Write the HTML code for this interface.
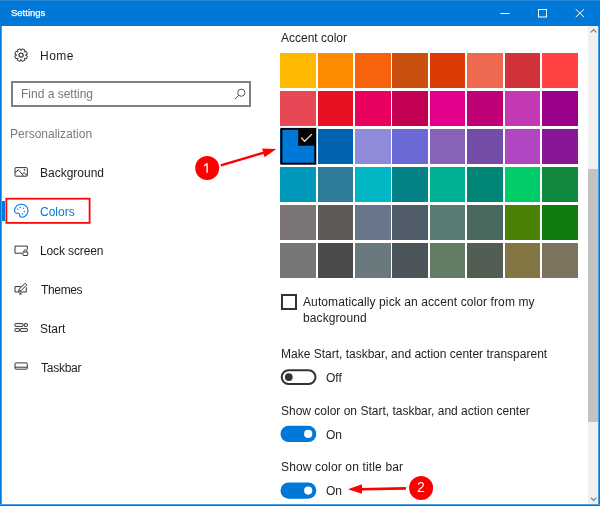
<!DOCTYPE html>
<html><head><meta charset="utf-8">
<style>
*{margin:0;padding:0;box-sizing:border-box}
html,body{width:600px;height:506px;overflow:hidden;background:#fff}
body{position:relative;font-family:"Liberation Sans",sans-serif;color:#1e1e1e}
.t{position:absolute;white-space:nowrap;font-size:12px;line-height:14px;will-change:transform}
.abs{position:absolute}
#title{left:0;top:0;width:600px;height:26px;background:#0078d7}
#bl{left:0;top:26px;width:2px;height:480px;background:linear-gradient(90deg,#0078d7 50%,#4c9fe2 50%)}
#br{left:598px;top:26px;width:2px;height:480px;background:linear-gradient(90deg,#4c9fe2 50%,#0078d7 50%)}
#bb{left:0;top:504px;width:600px;height:2px;background:linear-gradient(180deg,#4c9fe2 50%,#0078d7 50%)}
.sw{position:absolute;width:35.6px;height:35.4px}
</style></head><body>
<div id="title" class="abs"></div><div class="abs" style="left:0;top:0;width:600px;height:1px;background:#2a87d6"></div>
<div class="t" style="left:11px;top:7px;font-size:9.5px;line-height:12px;color:#fff;-webkit-text-stroke:0.25px #fff">Settings</div>
<svg class="abs" style="left:0;top:0" width="600" height="26">
  <path d="M500.5 13.5H509.5" stroke="#fff" stroke-width="1"/>
  <rect x="538.5" y="9.5" width="8" height="7.5" fill="none" stroke="#fff" stroke-width="1"/>
  <path d="M575.7 9.2L584.1 17.2M584.1 9.2L575.7 17.2" stroke="#fff" stroke-width="1"/>
</svg>

<!-- left nav -->
<svg class="abs" style="left:0;top:0" width="270" height="400">
  <g fill="none" stroke="#333" stroke-width="1" stroke-linejoin="round">
    <path d="M25.60 55.25 L27.43 56.07 L26.26 58.88 L24.38 58.18 L24.18 58.38 L24.88 60.26 L22.07 61.43 L21.25 59.60 L20.95 59.60 L20.13 61.43 L17.32 60.26 L18.02 58.38 L17.82 58.18 L15.94 58.88 L14.77 56.07 L16.60 55.25 L16.60 54.95 L14.77 54.13 L15.94 51.32 L17.82 52.02 L18.02 51.82 L17.32 49.94 L20.13 48.77 L20.95 50.60 L21.25 50.60 L22.07 48.77 L24.88 49.94 L24.18 51.82 L24.38 52.02 L26.26 51.32 L27.43 54.13 L25.60 54.95Z"/>
    <circle cx="21.1" cy="55.1" r="2.1" stroke-width="1.2"/>
    <!-- search -->
    <circle cx="241.3" cy="92.7" r="3.6" stroke="#555"/>
    <path d="M238.8 95.2L235 99" stroke="#555"/>
    <!-- background -->
    <rect x="15" y="167.6" width="12.3" height="8.6" rx="0.8"/>
    <path d="M15 172.6L18.3 169.8L23.5 175.8M22.3 174.2L24 172.6L27 175.4"/>
    <circle cx="24.5" cy="169.9" r="0.5"/>
    <!-- lock screen -->
    <path d="M22.3 253.2H15V246.1H27.3V249.6"/>
    <rect x="23" y="252" width="4.7" height="3.5" rx="0.6"/>
    <path d="M23.8 252V251.4A1.6 1.6 0 0 1 27 251.4V252"/>
    <!-- themes -->
    <path d="M20.8 286.6H15V292H26.3V287.4"/>
    <path d="M18.7 291.4L19.4 288.9L25.1 283.2L26.8 284.9L21.1 290.6Z"/>
    <path d="M19.3 293.9H21.5" stroke-width="1.5"/>
    <!-- start -->
    <rect x="15" y="323.6" width="8" height="2.8" rx="0.4"/>
    <rect x="24.3" y="323.6" width="3" height="2.8" rx="0.4"/>
    <rect x="15" y="328.6" width="4.3" height="2.8" rx="0.4"/>
    <rect x="20.3" y="328.6" width="7" height="2.8" rx="0.4"/>
    <!-- taskbar -->
    <rect x="15" y="362.9" width="12.3" height="6.3" rx="1"/>
    <path d="M15 367.2H27.3"/>
  </g>
  <g fill="none" stroke="#0078d7" stroke-width="1.1">
    <path d="M16.3 213.2C14.6 212.5 14.3 210.6 14.8 209C15.8 205.9 18.6 204.2 21.6 204.2C25.4 204.2 28 207.2 28 210.6C28 214.6 25 217.3 21.8 217.3C19.2 217.3 19.8 215.8 19.6 214.6C19.4 213.2 18.3 212.9 17.3 213.3Z"/>
  </g>
  <g fill="#0078d7">
    <circle cx="17.7" cy="209.2" r="0.75"/>
    <circle cx="20.3" cy="207.6" r="0.75"/>
    <circle cx="23.5" cy="208.3" r="0.75"/>
    <circle cx="24.3" cy="211.5" r="0.75"/>
    <circle cx="22.5" cy="214" r="0.75"/>
  </g>
</svg>
<div class="t" style="left:39.5px;top:49px;letter-spacing:0.5px">Home</div>
<div class="abs" style="left:11px;top:81px;width:240px;height:26px;border:2px solid #808080"></div>
<div class="t" style="left:20.5px;top:87px;color:#777">Find a setting</div>
<div class="t" style="left:9.5px;top:127px;color:#7a7a7a">Personalization</div>
<div class="t" style="left:39.5px;top:165.5px">Background</div>
<div class="t" style="left:39.5px;top:204.5px;color:#0078d7">Colors</div>
<div class="t" style="left:39.5px;top:244px;letter-spacing:-0.12px">Lock screen</div>
<div class="t" style="left:40.5px;top:282.5px;letter-spacing:-0.35px">Themes</div>
<div class="t" style="left:40px;top:322px">Start</div>
<div class="t" style="left:40.5px;top:360.5px;letter-spacing:-0.25px">Taskbar</div>
<div class="abs" style="left:2px;top:201px;width:3px;height:20px;background:#0078d7"></div>


<!-- right -->
<div class="t" style="left:280.5px;top:31.2px">Accent color</div>
<div class="sw" style="left:280.40px;top:52.60px;background:#FFB900"></div>
<div class="sw" style="left:317.76px;top:52.60px;background:#FF8C00"></div>
<div class="sw" style="left:355.12px;top:52.60px;background:#F7630C"></div>
<div class="sw" style="left:392.48px;top:52.60px;background:#CA5010"></div>
<div class="sw" style="left:429.84px;top:52.60px;background:#DA3B01"></div>
<div class="sw" style="left:467.20px;top:52.60px;background:#EF6950"></div>
<div class="sw" style="left:504.56px;top:52.60px;background:#D13438"></div>
<div class="sw" style="left:541.92px;top:52.60px;background:#FF4343"></div>
<div class="sw" style="left:280.40px;top:90.66px;background:#E74856"></div>
<div class="sw" style="left:317.76px;top:90.66px;background:#E81123"></div>
<div class="sw" style="left:355.12px;top:90.66px;background:#EA005E"></div>
<div class="sw" style="left:392.48px;top:90.66px;background:#C30052"></div>
<div class="sw" style="left:429.84px;top:90.66px;background:#E3008C"></div>
<div class="sw" style="left:467.20px;top:90.66px;background:#BF0077"></div>
<div class="sw" style="left:504.56px;top:90.66px;background:#C239B3"></div>
<div class="sw" style="left:541.92px;top:90.66px;background:#9A0089"></div>
<div class="sw" style="left:280.40px;top:128.72px;background:#0078D7"></div>
<div class="sw" style="left:317.76px;top:128.72px;background:#0063B1"></div>
<div class="sw" style="left:355.12px;top:128.72px;background:#8E8CD8"></div>
<div class="sw" style="left:392.48px;top:128.72px;background:#6B69D6"></div>
<div class="sw" style="left:429.84px;top:128.72px;background:#8764B8"></div>
<div class="sw" style="left:467.20px;top:128.72px;background:#744DA9"></div>
<div class="sw" style="left:504.56px;top:128.72px;background:#B146C2"></div>
<div class="sw" style="left:541.92px;top:128.72px;background:#881798"></div>
<div class="sw" style="left:280.40px;top:166.78px;background:#0099BC"></div>
<div class="sw" style="left:317.76px;top:166.78px;background:#2D7D9A"></div>
<div class="sw" style="left:355.12px;top:166.78px;background:#00B7C3"></div>
<div class="sw" style="left:392.48px;top:166.78px;background:#038387"></div>
<div class="sw" style="left:429.84px;top:166.78px;background:#00B294"></div>
<div class="sw" style="left:467.20px;top:166.78px;background:#018574"></div>
<div class="sw" style="left:504.56px;top:166.78px;background:#00CC6A"></div>
<div class="sw" style="left:541.92px;top:166.78px;background:#10893E"></div>
<div class="sw" style="left:280.40px;top:204.84px;background:#7A7574"></div>
<div class="sw" style="left:317.76px;top:204.84px;background:#5D5A58"></div>
<div class="sw" style="left:355.12px;top:204.84px;background:#68768A"></div>
<div class="sw" style="left:392.48px;top:204.84px;background:#515C6B"></div>
<div class="sw" style="left:429.84px;top:204.84px;background:#567C73"></div>
<div class="sw" style="left:467.20px;top:204.84px;background:#486860"></div>
<div class="sw" style="left:504.56px;top:204.84px;background:#498205"></div>
<div class="sw" style="left:541.92px;top:204.84px;background:#107C10"></div>
<div class="sw" style="left:280.40px;top:242.90px;background:#767676"></div>
<div class="sw" style="left:317.76px;top:242.90px;background:#4C4A48"></div>
<div class="sw" style="left:355.12px;top:242.90px;background:#69797E"></div>
<div class="sw" style="left:392.48px;top:242.90px;background:#4A5459"></div>
<div class="sw" style="left:429.84px;top:242.90px;background:#647C64"></div>
<div class="sw" style="left:467.20px;top:242.90px;background:#525E54"></div>
<div class="sw" style="left:504.56px;top:242.90px;background:#847545"></div>
<div class="sw" style="left:541.92px;top:242.90px;background:#7E735F"></div>

<div class="abs" style="left:280.5px;top:293.8px;width:16px;height:16px;border:2px solid #333"></div>
<div class="t" style="left:303px;top:294.2px;line-height:16px;letter-spacing:0.1px">Automatically pick an accent color from my<br>background</div>
<div class="t" style="left:280.5px;top:346.5px">Make Start, taskbar, and action center transparent</div>
<div class="t" style="left:325.5px;top:371px">Off</div>
<div class="t" style="left:280.5px;top:403.5px">Show color on Start, taskbar, and action center</div>
<div class="t" style="left:325.5px;top:428px">On</div>
<div class="t" style="left:280.5px;top:460px;letter-spacing:0.15px">Show color on title bar</div>
<div class="t" style="left:325.5px;top:484.3px">On</div>

<!-- scrollbar -->
<div class="abs" style="left:588px;top:26px;width:10px;height:478px;background:#f0f0f0"></div>
<div class="abs" style="left:588px;top:169px;width:10px;height:253px;background:#c2c2c2"></div>
<svg class="abs" style="left:0;top:0" width="600" height="506">
  <!-- selected swatch overlay -->
  <rect x="281.4" y="128.9" width="33.9" height="34.8" fill="none" stroke="#000" stroke-width="2"/>
  <rect x="298.2" y="129.9" width="16.6" height="15.8" fill="#000"/>
  <path d="M301.2 137.6L304.6 141.2L311.9 134.1" fill="none" stroke="#e6e6e6" stroke-width="1.3"/>
  <!-- toggles -->
  <rect x="281.7" y="370.2" width="33.8" height="13.8" rx="6.9" fill="none" stroke="#333" stroke-width="2"/>
  <circle cx="288.8" cy="377.1" r="3.9" fill="#333"/>
  <rect x="280.5" y="425.8" width="35.8" height="16.2" rx="8.1" fill="#0078d7"/>
  <circle cx="308.2" cy="433.9" r="4.1" fill="#fff"/>
  <rect x="280.5" y="482.5" width="35.8" height="16.2" rx="8.1" fill="#0078d7"/>
  <circle cx="308.2" cy="490.6" r="4.1" fill="#fff"/>
  <!-- scroll arrows -->
  <path d="M590.8 32.4L593.6 29.6L596.4 32.4" fill="none" stroke="#7a7a7a" stroke-width="1.2"/>
  <path d="M590.8 497.6L593.6 500.4L596.4 497.6" fill="none" stroke="#7a7a7a" stroke-width="1.2"/>
  <rect x="6.4" y="198.7" width="83.2" height="24.2" fill="none" stroke="#f80808" stroke-width="1.8"/>
  <!-- annotation 1 -->
  <circle cx="207.2" cy="168.1" r="12" fill="#f00"/>
  <path d="M220.8 165.3L264 152.6" stroke="#f00" stroke-width="2.4"/>
  <path d="M276.3 149L262.2 148.4L264.5 157.2Z" fill="#f00"/>
  <path d="M207.1 163.2V172.8M207.1 163.6L204.2 165.9" stroke="#fff" stroke-width="1.35" fill="none"/>
  <!-- annotation 2 -->
  <circle cx="421.1" cy="487.9" r="12" fill="#f00"/>
  <path d="M406 488.4L360 489.2" stroke="#f00" stroke-width="2.6"/>
  <path d="M347.9 489.3L362 484.3L362 493.8Z" fill="#f00"/>
</svg>

<div class="t" style="left:414px;top:479px;width:14px;text-align:center;color:#fff;font-size:14px;line-height:16px">2</div>

<div id="bl" class="abs"></div><div id="br" class="abs"></div><div id="bb" class="abs"></div>
</body></html>
